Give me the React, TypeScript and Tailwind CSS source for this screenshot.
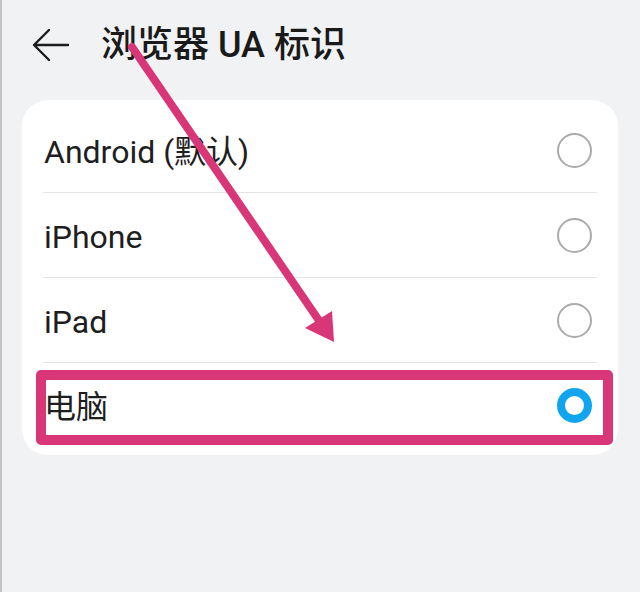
import React from "react";

type Option = { label: string; selected?: boolean };

const options: Option[] = [
  { label: "Android (默认)" },
  { label: "iPhone" },
  { label: "iPad" },
  { label: "电脑", selected: true },
];

const fontStack = {
  fontFamily: 'Roboto, "Noto Sans CJK SC", "Noto Sans", sans-serif',
};

function BackArrow() {
  return (
    <svg width="38" height="34" viewBox="0 0 38 34" fill="none">
      <path
        d="M36 17H3M17 2L2 17L17 32"
        stroke="#1c1c1c"
        strokeWidth="2.4"
        strokeLinecap="round"
        strokeLinejoin="round"
      />
    </svg>
  );
}

function Radio({ selected }: { selected?: boolean }) {
  if (selected) {
    return (
      <div className="h-[35px] w-[35px] rounded-full border-[8px] border-[#12a5ef] bg-white" />
    );
  }
  return <div className="h-[35px] w-[35px] rounded-full border-2 border-[#ababab]" />;
}

export default function App() {
  return (
    <div
      className="relative h-[592px] w-[640px] overflow-hidden border-l-2 border-[#c4c4c4] bg-[#f1f2f4]"
      style={fontStack}
    >
      {/* top bar */}
      <div className="flex h-[90px] items-center pl-[30px]">
        <BackArrow />
        <h1 className="ml-[31px] text-[36px] font-medium leading-none text-[#1a1a1a]">
          浏览器 UA 标识
        </h1>
      </div>

      {/* option list */}
      <div className="ml-[20px] mt-[10px] w-[596px] rounded-[26px] bg-white pb-[7px] pt-[8px]">
        {options.map((o, i) => (
          <div
            key={o.label}
            className={
              "mx-[21px] flex h-[85px] items-center justify-between pl-[1px] pr-[5px] " +
              (i < options.length - 1 ? "border-b border-[#e4e4e4]" : "")
            }
          >
            <span className="pt-[3px] text-[32px] leading-none text-[#1e1e1e]">{o.label}</span>
            <Radio selected={o.selected} />
          </div>
        ))}
      </div>

      {/* highlight frame around the selected row */}
      <div className="absolute left-[34px] top-[370px] h-[75px] w-[577px] rounded-[5px] border-[10px] border-[#d83677]" />

      {/* pointer arrow */}
      <svg
        className="pointer-events-none absolute left-0 top-0"
        width="640"
        height="592"
        viewBox="0 0 640 592"
      >
        <line
          x1="130"
          y1="47"
          x2="318"
          y2="322"
          stroke="#d83677"
          strokeWidth="8"
          strokeLinecap="round"
        />
        <polygon points="332,342 303,328 330,311" fill="#d83677" />
      </svg>
    </div>
  );
}
